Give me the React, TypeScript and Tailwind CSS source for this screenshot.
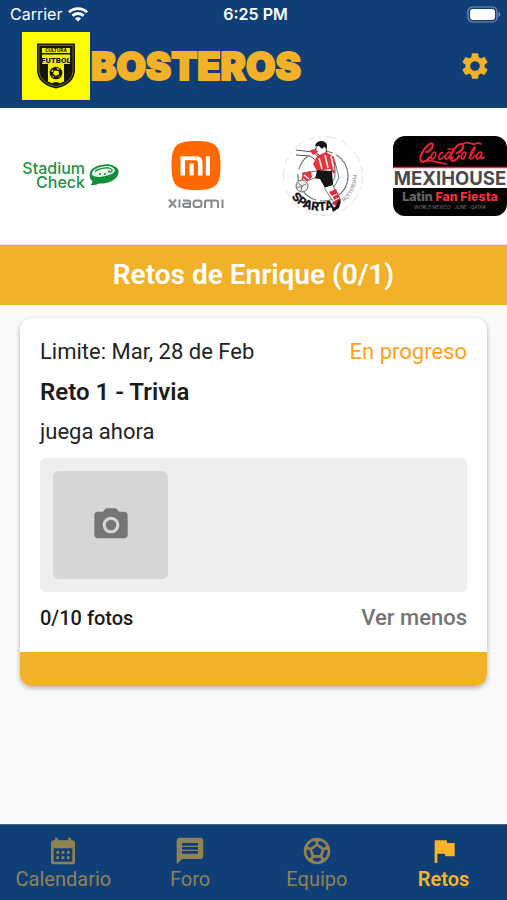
import type { ReactNode } from "react";
import {
  MdCalendarMonth,
  MdCameraAlt,
  MdFlag,
  MdMessage,
  MdSettings,
  MdSportsSoccer,
} from "react-icons/md";

function WifiIcon() {
  return (
    <svg viewBox="0 0 20 15" className="h-[15px] w-5" fill="none" stroke="white" strokeWidth="2.8" aria-hidden="true">
      <path d="M1 5.2a13 13 0 0 1 18 0" />
      <path d="M4.400 8.800a8 8 0 0 1 11.200 0" />
      <path d="M10 14.600 6.900 11.500a4.400 4.400 0 0 1 6.200 0Z" fill="white" stroke="none" />
    </svg>
  );
}

function BatteryIcon() {
  return (
    <svg viewBox="0 0 34 17" className="h-[17px] w-[34px]" aria-hidden="true">
      <rect x="1" y="1" width="29" height="15" rx="4.5" fill="none" stroke="#7d93b8" strokeWidth="1.2" />
      <rect x="3" y="3" width="25" height="11" rx="3" fill="white" />
      <path d="M31.500 6v5q1.800-.8 1.800-2.500T31.500 6Z" fill="#7d93b8" />
    </svg>
  );
}

function ClubCrest() {
  return (
    <svg viewBox="0 0 68 68" className="size-[68px] shrink-0 bg-[#ffff00]" role="img" aria-label="Cultura Futbol">
      <path d="M15 11.500h38v26.500q0 14-19 18.500Q15 52 15 38Z" fill="#16160a" />
      <path d="M16.900 13.400h34.200v24.600q0 12.500-17.100 16.700Q16.900 50.500 16.900 38Z" fill="none" stroke="#85851a" strokeWidth=".8" />
      <path d="M20 16h28v5H20Zm0 6.500h28v9.500H20Z" fill="#f0f000" />
      <text x="34" y="20.300" textAnchor="middle" fontSize="5" fontWeight="700" fill="#16160a" fontFamily="Roboto, sans-serif">CULTURA</text>
      <text x="34" y="30.700" textAnchor="middle" fontSize="8" fontWeight="900" fill="#16160a" fontFamily="Roboto, sans-serif">FUTBOL</text>
      <path d="M26 32h16v17.500q-8 4.500-16 0Z" fill="#f6f600" />
      <circle cx="34" cy="41" r="6.300" fill="#16160a" />
      <g fill="#f6f600">
        <path d="m32.500 38.500 4 .5.500 3.500-3.500 1.500-2.500-2.500Z" />
        <path d="m34 35.500 4 1.500-2 1Zm-5 4.500 1.500-2.500 1 2Zm.5 3.500 2 .5.5 2Zm6 2.500 1.500-1.500 2-.5Z" />
      </g>
      <path d="M29 52q5-4 10 0l-5 2Z" fill="#16160a" />
    </svg>
  );
}

function StadiumCheckLogo() {
  return (
    <svg viewBox="0 0 100 32" className="h-8 w-[100px]" role="img" aria-label="Stadium Check">
      <text fill="#209344" fontFamily="Inter, sans-serif" fontSize="16" fontWeight="500" textAnchor="end">
        <tspan x="66" y="14">Stadium</tspan>
        <tspan x="66" y="28">Check</tspan>
      </text>
      <path d="M71 12.500C72 7 86 2 94 5.500q4 1.500 5.500 5c1 7-6 12-15 13q-2-.2-4 0-3 1.500-9 1.700 2-2 2-3.700-4-3.500-2.500-9Z" fill="#128d3b" />
      <path d="M73 12.500C75 8 86 5 92 6.500q8 4-.5 8Q79 19 73 15Z" fill="#e9f6ec" />
      <path d="M76 11.500q5-4 14-3.500 6 2 1 4.500" fill="none" stroke="#128d3b" strokeWidth="1.300" />
      <g fill="#128d3b">
        <circle cx="81" cy="14" r="1" />
        <circle cx="86" cy="14" r="1" />
        <circle cx="90" cy="11.500" r="1" />
      </g>
    </svg>
  );
}

function XiaomiLogo() {
  return (
    <svg viewBox="0 0 56 70" className="h-[70px] w-14" role="img" aria-label="Xiaomi">
      <path d="M28 0c20 0 24.500 4.500 24.500 24.500S48 49 28 49 3.500 44.500 3.500 24.500 8 0 28 0Z" fill="#ff6900" />
      <path d="M12.500 34.500V15.300h16q6 0 6 6v13.200h-4.500V22q0-2.800-3-2.800H17v15.300ZM21.500 22.500h4.200v12h-4.200Zm16.300-7.200H42v19.200h-4.200Z" fill="white" />
      <g fill="none" stroke="#85888b" strokeWidth="2">
        <path d="m1 58.500 7 8m0-8-7 8M11.500 58.500v8M15 59.500h5q2 0 2 2v4.500h-5q-2 0-2-1.700t2-1.700h5" />
        <rect x="25.500" y="59.500" width="8" height="6.500" rx="2.500" />
        <path d="M37 67v-5.500q0-2 2-2h8.500q2.500 0 2.500 2V67m-6.500-7v7M54.500 58.500V67" />
      </g>
    </svg>
  );
}

function SpartaLogo() {
  return (
    <svg viewBox="0 0 84 84" className="size-[84px]" role="img" aria-label="Sparta Rotterdam">
      <defs>
        <path id="club-arc" d="M10 63Q29 85 59 72" />
        <path id="city-arc" d="M63 68Q76 58 76 38" />
      </defs>
      <circle cx="42" cy="42" r="39.500" fill="none" stroke="#e4e4e4" strokeWidth="1" strokeDasharray="8 3 2 5 12 4" />
      <circle cx="42" cy="42" r="25" fill="none" stroke="#777" strokeWidth="1.200" strokeDasharray="42 4 34 5" />
      <path d="M15 16 32 18l7 6-3 3-7-5-14-1" fill="#fff" stroke="#555" strokeWidth="1" />
      <circle cx="40" cy="16" r="5.500" fill="#fff" stroke="#333" strokeWidth="1" />
      <path d="M34 12q1-5 7-5 6 1 5 7l-3-1-2 2-3-3Z" fill="#151515" />
      <path d="m29 16 6-1 2 3-5 3Z" fill="#e3353e" />
      <path d="m36 22 9-4 8 5 3 13-3 4-4-5-13 2-4-7Z" fill="#e3353e" />
      <path d="m38 24 3 11m3-14 3 13m3-12 3 14" stroke="#ffecec" strokeWidth="1.600" />
      <path d="m54 28 4 16-5 9-3-2 4-8Z" fill="#fff" stroke="#777" strokeWidth="1" />
      <path d="m36 36 15 1 1 14-8 3-5-9-8-1Z" fill="#151515" />
      <path d="m36 37-15 2 4 8 9-3M43 54l9 13 5-3-5-13" fill="#fff" stroke="#777" strokeWidth="1" />
      <path d="m22 39 8-2 1 6-7 7-4-2Z" fill="#e3353e" />
      <path d="m23 41 5 4m-6 0 4 3" stroke="#fff" strokeWidth="1.300" />
      <path d="m48 58 7-3 5 11-5 6-4-2 2-5Z" fill="#d92e38" />
      <path d="m50 63 6-3m-4 7 6-3" stroke="#fff" strokeWidth="1.300" />
      <path d="m57 66 3 1-2 7-6 4-1-3 4-3Z" fill="#151515" />
      <circle cx="21" cy="52" r="6" fill="#eee" stroke="#666" strokeWidth="1" />
      <path d="m17 49 4 3 4-2m-4 2-1 5m-4-3 5-2" fill="none" stroke="#777" />
      <text fontFamily="Inter, sans-serif" fontSize="12" fontWeight="800" fill="#161616">
        <textPath href="#club-arc">SPARTA</textPath>
      </text>
      <text fontFamily="Inter, sans-serif" fontSize="5" fill="#777">
        <textPath href="#city-arc">ROTTERDAM</textPath>
      </text>
    </svg>
  );
}

function MexihouseLogo() {
  return (
    <svg viewBox="0 0 114 82" className="h-[82px] w-[114px] shrink-0" role="img" aria-label="Coca-Cola Mexihouse Latin Fan Fiesta">
      <rect x="0" y="1" width="114" height="80" rx="12" fill="#030303" />
      <path d="M0 33h114v20H0Z" fill="white" />
      <path d="M0 32.500h114" stroke="#ec2f40" strokeWidth="1.500" />
      {/* Script wordmark with its long underline and looped capitals */}
      <g fill="none" stroke="#e72234" strokeLinecap="round" strokeLinejoin="round">
        <path d="M33 17c3 0 7-4 7-7 0-2-3-2-6 1-5 5-8 12-6 15 2 2 6 0 9-4" strokeWidth="2.200" />
        <path d="M64 18c4-1 7-5 6-8-1-2-4-1-6 1-5 5-8 11-6 14 2 2 6 0 8-4" strokeWidth="2.200" />
        <path d="M28 27c9-3 15 0 25 2M70 9c4-4 8 1 12 0 3-1 4-2 6 0" strokeWidth="1.700" />
        <path d="M42 17c-3 0-5 6-3 7 3 0 5-6 3-7m8 1c-2-2-5 3-4 6 2 1 4-1 5-3m6-4c-4 0-6 6-4 7 2 0 4-3 5-6l-1 5q1 2 3-1M55 14h5M72 17c-3 0-5 6-3 7 3 0 5-6 3-7m4 6c3-3 6-9 6-11-3 1-7 12-4 12 2 0 3-2 4-4m6-3c-4 0-6 6-4 7 2 0 4-3 5-6l-1 5q1 2 3-1" strokeWidth="1.600" />
      </g>
      <g fontFamily="Inter, sans-serif" textAnchor="middle">
        <text x="57" y="49.500" fontSize="18.500" fontWeight="700" fill="#4a4a4d">MEXIHOUSE</text>
        <text x="57" y="66" fontSize="12.400" fontWeight="800">
          <tspan fill="#66676b">Latin </tspan>
          <tspan fill="#f3313b">Fan Fiesta</tspan>
        </text>
        <text x="57" y="73.500" fontSize="4.600" fill="#77777a">WORLD MEXICO · JUNE · QATAR</text>
      </g>
    </svg>
  );
}

function SponsorLink({ children }: { children: ReactNode }) {
  return <a href="#" className="flex items-center justify-center">{children}</a>;
}

const tabs = [
  { label: "Calendario", Icon: MdCalendarMonth, active: false },
  { label: "Foro", Icon: MdMessage, active: false },
  { label: "Equipo", Icon: MdSportsSoccer, active: false },
  { label: "Retos", Icon: MdFlag, active: true },
];

export default function App() {
  return (
    <div className="flex min-h-screen flex-col bg-[#fafafa] font-[Roboto,'Noto_Sans',sans-serif] text-[#242424]">
      <header className="bg-[#103f78] pb-2">
        <div className="grid h-8 grid-cols-3 items-center pr-1.5 pb-1 pl-2.5 text-white">
          <div className="flex items-center gap-1.5 font-[Inter,sans-serif] text-base">
            <span>Carrier</span>
            <WifiIcon />
          </div>
          <time className="text-center font-[Inter,sans-serif] text-base font-semibold">6:25 PM</time>
          <div className="flex justify-end"><BatteryIcon /></div>
        </div>
        <div className="flex items-center pr-4 pl-[22px]">
          <ClubCrest />
          <h1 className="pl-px font-[Inter,sans-serif] text-[38px] leading-10 font-black text-[#f1b229] [-webkit-text-stroke:2px_#f1b229]">BOSTEROS</h1>
          <button type="button" aria-label="Ajustes" className="ml-auto text-[#f1b229]">
            <MdSettings className="size-8" />
          </button>
        </div>
      </header>

      <section aria-label="Patrocinadores" className="overflow-hidden border-b border-[#e4e4e4] bg-white">
        <div className="-mr-1.5 grid h-[136px] grid-cols-4 pl-1.5">
          <SponsorLink><StadiumCheckLogo /></SponsorLink>
          <SponsorLink><XiaomiLogo /></SponsorLink>
          <SponsorLink><SpartaLogo /></SponsorLink>
          <SponsorLink><MexihouseLogo /></SponsorLink>
        </div>
      </section>

      <main className="flex-1">
        <h2 className="bg-[#f1b229] py-3.5 text-center text-[28px] leading-8 font-semibold text-white">Retos de Enrique (0/1)</h2>
        <article className="mx-5 mt-[13px] overflow-hidden rounded-xl bg-white shadow-[0_2px_5px_rgba(0,0,0,0.3)]">
          <div className="px-5 pt-5 pb-5">
            <div className="flex items-center justify-between text-[22px] leading-7">
              <p>Limite: Mar, 28 de Feb</p>
              <p className="text-[#ffa21a]">En progreso</p>
            </div>
            <h3 className="mt-3 text-2xl leading-7 font-semibold text-[#1b1b1b]">Reto 1 - Trivia</h3>
            <p className="mt-3 text-[22px] leading-7">juega ahora</p>
            <div className="mt-3 rounded-md bg-[#eeeeee] p-[13px]">
              <button type="button" aria-label="Agregar foto" className="flex h-[108px] w-[115px] items-center justify-center rounded-md bg-[#d6d6d6] text-[#757575]">
                <MdCameraAlt className="size-10" />
              </button>
            </div>
            <div className="mt-3 flex items-center justify-between leading-7">
              <p className="text-xl leading-7 font-medium text-[#1b1b1b]">0/10 fotos</p>
              <button type="button" className="text-[22px] leading-7 font-medium text-[#757575]">Ver menos</button>
            </div>
          </div>
          <div className="h-[34px] bg-[#f1b229]" />
        </article>
      </main>

      <nav aria-label="Principal" className="grid h-[76px] grid-cols-4 border-t border-[#42638e] bg-[#103f78]">
        {tabs.map(({ label, Icon, active }) => (
          <a
            key={label}
            href="#"
            aria-current={active ? "page" : undefined}
            className={`flex flex-col items-center pt-2.5 text-xl leading-6 ${active ? "font-semibold text-[#f8b527]" : "text-[#918253]"}`}
          >
            <Icon className="size-8" />
            <span>{label}</span>
          </a>
        ))}
      </nav>
    </div>
  );
}
